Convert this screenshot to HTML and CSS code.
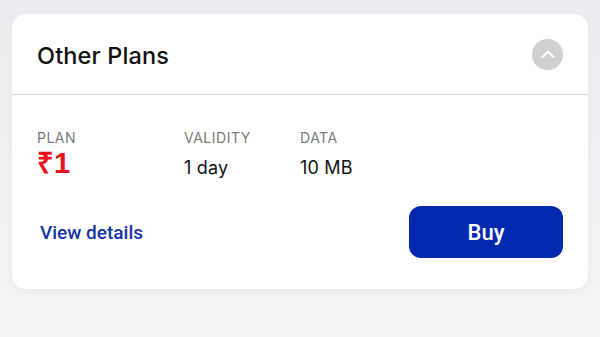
FILE: index.html
```html
<!DOCTYPE html>
<html lang="en">
<head>
  <meta charset="UTF-8">
  <meta name="viewport" content="width=device-width, initial-scale=1.0">
  <title>Other Plans</title>
  <link rel="stylesheet" href="styles.css">
</head>
<body>

<main>
  <!-- Plan card -->
  <section class="card">
    <div class="card-head">
      <h2>Other Plans</h2>
      <button class="toggle" aria-label="Collapse">
        <svg width="16" height="10" viewBox="0 0 16 10"><path d="M2.5 8 L8 2.8 L13.5 8" fill="none" stroke="white" stroke-width="2.2" stroke-linecap="round" stroke-linejoin="round"/></svg>
      </button>
    </div>

    <div class="card-body">
      <div class="plan-row">
        <div class="col col-plan">
          <span class="label">PLAN</span>
          <span class="price">₹1</span>
        </div>
        <div class="col col-validity">
          <span class="label">VALIDITY</span>
          <span class="value">1 day</span>
        </div>
        <div class="col">
          <span class="label">DATA</span>
          <span class="value">10 MB</span>
        </div>
      </div>

      <div class="actions">
        <a href="#" class="details">View details</a>
        <button class="buy">Buy</button>
      </div>
    </div>
  </section>
</main>

</body>
</html>
```

FILE: styles.css
```css
body {
  font-family: Inter, 'Liberation Sans', sans-serif;
  margin: 0;
  padding: 0;
  background: linear-gradient(to bottom, #ebecf0, #f5f5f7);
  height: 337px;
  overflow: hidden;
}

main {
  padding: 14px 12px;
}

.card {
  background: white;
  border-radius: 14px;
  box-shadow: 0 2px 10px rgba(0, 0, 0, 0.05);
  overflow: hidden;
}

.card-head {
  display: flex;
  align-items: center;
  justify-content: space-between;
  height: 80px;
  padding: 0 25px 0 25px;
  border-bottom: 1px solid #d8d8da;
}

.card-head h2 {
  margin: 0;
  font-size: 23.5px;
  font-weight: 500;
  letter-spacing: 0.15px;
  color: #111;
  padding-top: 2px;
}

.toggle {
  width: 31px;
  height: 31px;
  border: none;
  border-radius: 50%;
  background: #d0d0d2;
  display: flex;
  align-items: center;
  justify-content: center;
  padding: 0;
}

.card-body {
  padding: 34px 25px 31px 25px;
}

.plan-row {
  display: flex;
}

.col {
  display: flex;
  flex-direction: column;
}

.col-plan {
  width: 147px;
}

.col-validity {
  width: 116px;
}

.label {
  font-size: 14px;
  letter-spacing: 0.5px;
  color: #7a7a7c;
  line-height: 18px;
}

.value {
  font-size: 18px;
  letter-spacing: 0.2px;
  color: #111;
  margin-top: 10px;
  line-height: 21px;
}

.price {
  font-family: 'Liberation Sans', Arial, sans-serif;
  font-size: 29px;
  font-weight: bold;
  color: #e8131c;
  line-height: 30px;
  margin-top: 1px;
}

.actions {
  display: flex;
  align-items: center;
  justify-content: space-between;
  margin-top: 28px;
}

.details {
  font-family: Roboto, sans-serif;
  font-size: 19px;
  font-weight: 500;
  color: #1434a4;
  text-decoration: none;
  margin-left: 3px;
}

.buy {
  font-family: Roboto, sans-serif;
  width: 154px;
  height: 52px;
  border: none;
  border-radius: 12px;
  background: #0029b0;
  color: white;
  font-size: 22px;
  font-weight: 500;
}
```
